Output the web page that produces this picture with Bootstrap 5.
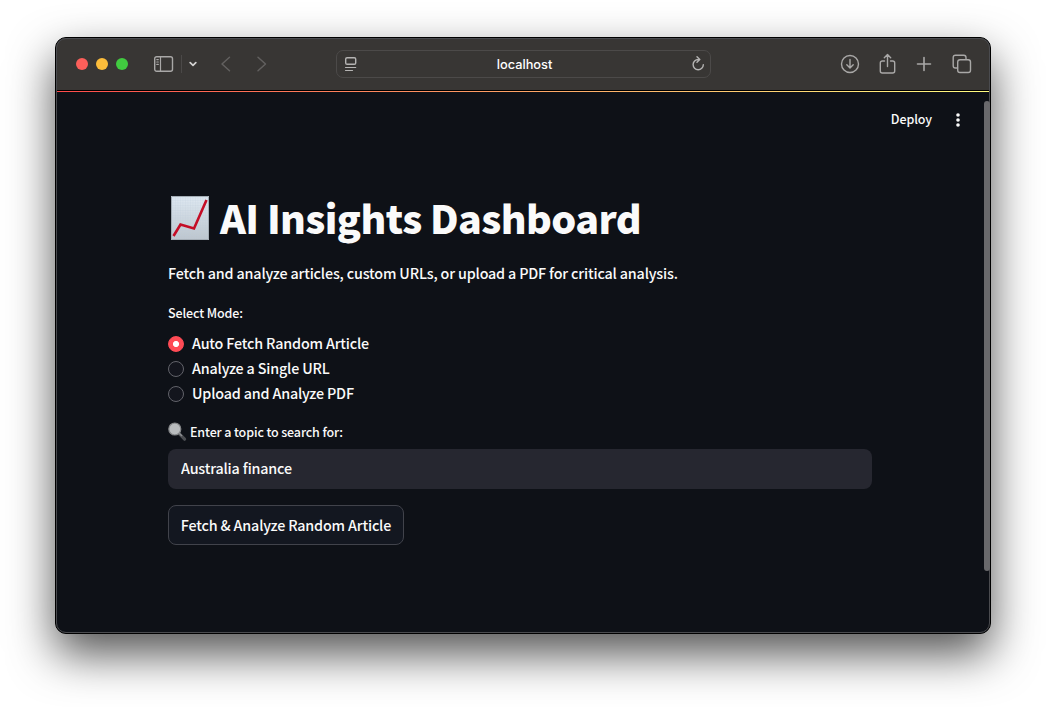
<!DOCTYPE html>
<html lang="en" data-bs-theme="dark">
<head>
<meta charset="utf-8">
<meta name="viewport" content="width=device-width, initial-scale=1">
<title>AI Insights Dashboard</title>
<link href="https://cdn.jsdelivr.net/npm/bootstrap@5.3.0/dist/css/bootstrap.min.css" rel="stylesheet">
<style>
body{background:#fff;color:#fafafa;font-family:"Noto Sans CJK JP","Noto Sans CJK SC",sans-serif;font-weight:500;font-size:14.32px;line-height:24px;height:707px;padding:37px 55px 0;overflow:hidden}
.win{width:936px;height:597px;border:1px solid #000;border-radius:11px;background:#0e1117;box-shadow:0 20px 46px rgba(0,0,0,.68)}
.win::after{content:"";position:absolute;inset:0;border:1px solid #4a4b4f;border-radius:10px;pointer-events:none}
.toolbar{height:53px;background:#383634;border-bottom:1px solid #000;color:#a9a8a7;border-radius:10px 10px 0 0;padding-left:20px}
.toolbar svg{display:block;flex:none;fill:none;stroke:currentColor;stroke-width:1.4;stroke-linecap:round;stroke-linejoin:round}
.light{width:12px;height:12px;flex:none}
.red{background:#fb5f5a}.yellow{background:#fcbd3b}.green{background:#41cb40}
.sidebar-icon{margin-left:25px}
.sep{width:1px;height:18px;background:#4b4948;margin:0 7px}
.toolbar .chevron{color:#d4d3d2}
.dim{color:#62605f}
.address{width:375px;height:28px;border:1px solid #4c4a49;border-radius:7px;color:#fff;font:500 12.8px/26px Inter,sans-serif;margin-left:68px;padding:0 5px 0 7px}
.address span{padding-top:1px}
.address svg{color:#b5b4b3}
.accent{height:1px;background:linear-gradient(90deg,#ff4b4b,#fffd80)}
.appbar{height:54px;padding-right:27px}
.deploy{font-size:12.5px;letter-spacing:-.1px}
.thumb{width:6px;height:470px;top:63px;right:0;background:#69696c;border-radius:3px;z-index:1}
.main{width:704px;margin-left:112px;padding-top:46px}
h1{font-size:39.35px;line-height:53px;font-weight:900;margin:0 0 18px;color:#fafafa;letter-spacing:-.6px}
h1 span{margin-top:-2px}
.chart{width:40px;height:46px;margin:0 10px 0 2px}
.intro{letter-spacing:-.165px;margin-bottom:18px}
.caption{font-size:12.5px;line-height:20px;letter-spacing:-.13px}
.modes{margin-top:8px}
.modes .form-check{min-height:25px;padding:0;line-height:25px;letter-spacing:-.165px}
.modes .form-check span{margin-top:-2px}
.modes .form-check-input{width:16px;height:16px;margin:0 8px 0 0;float:none;flex:none;background:#13151d;border:1px solid #62636a;box-shadow:none}
.modes .form-check-input:checked{background:radial-gradient(circle,#fff 0 2.7px,#ff4b55 3.4px);border-color:#ff4b55}
.topic{height:40px;background:#262730;border:0;border-radius:8px;padding:0 13px 3px;color:#fafafa;font:inherit;letter-spacing:-.18px;font-feature-settings:"liga" 1}
.topic:focus{background:#262730;box-shadow:none}
.fetch{width:236px;height:40px;background:#131720;border:1px solid #41434b;border-radius:8px;color:#fafafa;font:inherit;padding:0;letter-spacing:-.165px}
</style>
</head>
<body>
<div class="win position-relative">
  <header class="toolbar d-flex align-items-center">
    <div class="d-flex gap-2"><i class="light rounded-circle red"></i><i class="light rounded-circle yellow"></i><i class="light rounded-circle green"></i></div>
    <svg class="sidebar-icon" width="21" height="18" viewBox="0 0 21 18"><rect x="1.7" y="1.7" width="17.8" height="14.6" rx="2"/><path d="M7.5 2v14M3.8 4.6h1.5M3.8 7h1.5M3.8 9.4h1.5" stroke-width="1.2"/></svg>
    <span class="sep"></span>
    <svg class="chevron" width="8" height="6" viewBox="0 0 8 6"><path d="M1.2 1.7 4 4.3 6.8 1.7" stroke-width="1.7"/></svg>
    <svg class="dim" style="margin-left:23px" width="12" height="16" viewBox="0 0 12 16"><path d="M9.5 1.2 2 8l7.5 6.8" stroke-width="1.5"/></svg>
    <svg class="dim" style="margin-left:24px" width="12" height="16" viewBox="0 0 12 16"><path d="M2 1.2 9.5 8 2 14.8" stroke-width="1.5"/></svg>
    <div class="address d-flex align-items-center justify-content-between">
      <svg width="14" height="16" viewBox="0 0 14 16"><rect x="1.7" y="1.7" width="10" height="6.6" rx="1.4"/><path d="M1.5 11.5h10.2M1.5 14.5H8.5" stroke-width="1.2"/></svg>
      <span>localhost</span>
      <svg width="14" height="16" viewBox="0 0 14 16"><path d="M7.2 3.5a5.1 5.1 0 1 0 5.1 5.2M6 .8l2.8 2.8L6 6.2"/></svg>
    </div>
    <div class="d-flex align-items-center" style="margin-left:129px">
      <svg width="20" height="20" viewBox="0 0 20 20"><circle cx="10" cy="10" r="8.5"/><path d="M10 5.5v8.2M6.8 10.7l3.2 3.2 3.2-3.2"/></svg>
      <svg style="margin-left:19px" width="17" height="22" viewBox="0 0 17 22"><path d="M5.5 8H3.3a2 2 0 0 0-2 2v8a2 2 0 0 0 2 2h10.4a2 2 0 0 0 2-2v-8a2 2 0 0 0-2-2h-2.2M8.5 13.5V1.8M5.3 4.8l3.2-3.2 3.2 3.2"/></svg>
      <svg style="margin-left:20px" width="16" height="16" viewBox="0 0 16 16"><path d="M8 1.5v13M1.5 8h13" stroke-width="1.6"/></svg>
      <svg style="margin-left:20px" width="20" height="20" viewBox="0 0 20 20"><rect x="5.7" y="5.7" width="12.8" height="12.8" rx="2.3"/><path d="M5.5 14H3.4a2.2 2.2 0 0 1-2.2-2.2v-8.3a2.3 2.3 0 0 1 2.3-2.3h8.3A2.2 2.2 0 0 1 14 3.4v2"/></svg>
    </div>
  </header>
  <div class="accent"></div>
  <div class="appbar d-flex justify-content-end align-items-center">
    <span class="deploy">Deploy</span>
    <svg style="margin-left:21px;margin-top:2px" width="10" height="16" viewBox="0 0 10 16" fill="#fafafa"><circle cx="5" cy="3" r="1.8"/><circle cx="5" cy="8" r="1.8"/><circle cx="5" cy="13" r="1.8"/></svg>
  </div>
  <div class="thumb position-absolute"></div>
  <main class="main">
    <h1 class="d-flex align-items-center">
      <svg class="chart flex-shrink-0" viewBox="0 0 40 46"><defs><linearGradient id="paper" x2="0" y2="1"><stop stop-color="#dfe9f2"/><stop offset="1" stop-color="#bcc5cd"/></linearGradient><pattern id="grid" width="2.5" height="2.5" patternUnits="userSpaceOnUse"><path d="M0 0H2.5M0 0V2.5" stroke="#bccbd9" stroke-width=".35"/></pattern></defs><path fill="url(#paper)" d="M1 1h38v44H1z"/><path fill="url(#grid)" stroke="#a4adb5" d="M1.5 1.5h37v43h-37z"/><path d="M3.5 41 10.5 29.5 24 33.5 36.5 5" fill="none" stroke="#c40d26" stroke-width="2.6"/></svg>
      <span>AI Insights Dashboard</span>
    </h1>
    <p class="intro">Fetch and analyze articles, custom URLs, or upload a PDF for critical analysis.</p>
    <div class="caption">Select Mode:</div>
    <div class="modes">
      <label class="form-check d-flex align-items-center mb-0"><input class="form-check-input" type="radio" name="mode" checked><span>Auto Fetch Random Article</span></label>
      <label class="form-check d-flex align-items-center mb-0"><input class="form-check-input" type="radio" name="mode"><span>Analyze a Single URL</span></label>
      <label class="form-check d-flex align-items-center mb-0"><input class="form-check-input" type="radio" name="mode"><span>Upload and Analyze PDF</span></label>
    </div>
    <label class="caption d-flex align-items-center" for="topic" style="margin-top:16px;margin-bottom:7px">
      <svg width="19" height="20" viewBox="0 0 19 20" style="margin-right:3px"><path d="m11 11.5 5.6 5.7" stroke="#4c4e52" stroke-width="3.2" stroke-linecap="round"/><path d="m11 11 3 3" stroke="#8c8e91" stroke-width="1.5"/><circle cx="6.8" cy="7" r="6" fill="#b9bcbe" stroke="#858789" stroke-width="1.2"/></svg>Enter a topic to search for:</label>
    <input id="topic" class="topic form-control" type="text" value="Australia finance">
    <button class="fetch btn mt-3" type="button">Fetch &amp; Analyze Random Article</button>
  </main>
</div>
<script src="https://cdn.jsdelivr.net/npm/bootstrap@5.3.0/dist/js/bootstrap.bundle.min.js"></script>
</body>
</html>
